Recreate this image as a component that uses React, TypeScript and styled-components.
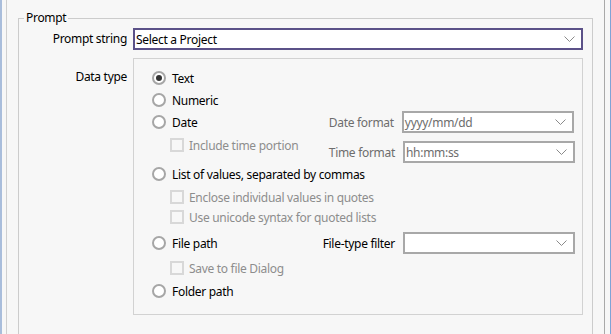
import styled, { createGlobalStyle } from 'styled-components';

const GlobalStyle = createGlobalStyle`
  html, body {
    margin: 0;
    padding: 0;
    background: #f7f7f7;
  }
  body {
    font-family: "Noto Sans", "Open Sans", sans-serif;
    font-size: 12px;
    letter-spacing: -0.3px;
    color: #000;
  }
`;

const Window = styled.div`
  width: 611px;
  height: 334px;
  box-sizing: border-box;
  overflow: hidden;
  background: #f7f7f7;
  border-left: 2px solid #a9bddb;
  border-right: 1px solid #7fa3d6;
  padding: 0 5px 0 4px;
  display: flex;
`;

const Pane = styled.div`
  flex: 1;
  border-left: 1px solid #cfcfcf;
  border-right: 1px solid #a9a9a9;
  padding: 10px 11px 0 11px;
`;

const GroupBox = styled.fieldset`
  margin: 0;
  padding: 2px 9px 20px 0;
  border: 1px solid #cccccc;
  min-width: 0;
`;

const Legend = styled.legend`
  margin-left: 5px;
  padding: 0 2px;
  line-height: 16px;
`;

const Form = styled.div`
  display: grid;
  grid-template-columns: 108px 1fr;
  column-gap: 6px;
  row-gap: 8px;
`;

const FieldLabel = styled.label<{ $top?: number }>`
  text-align: right;
  line-height: 16px;
  white-space: nowrap;
  align-self: ${p => (p.$top !== undefined ? 'start' : 'center')};
  padding-top: ${p => p.$top ?? 0}px;
`;

const Combo = styled.div<{ $accent?: boolean; $muted?: boolean; $width?: number }>`
  height: 22px;
  box-sizing: border-box;
  width: ${p => (p.$width ? `${p.$width}px` : '100%')};
  border: 2px solid ${p => (p.$accent ? '#5b5188' : '#a8a8a8')};
  background: #fff;
  display: flex;
  align-items: center;
  justify-content: space-between;
  padding: 0 6px 0 1px;
  color: ${p => (p.$muted ? '#6d6d6d' : '#000')};
  white-space: nowrap;
`;

const Chevron = () => (
  <svg width="11" height="6" viewBox="0 0 11 6">
    <polyline points="0.5,0.5 5.5,5.5 10.5,0.5" fill="none" stroke="#8a8a8a" strokeWidth="1" />
  </svg>
);

const OptionsPanel = styled.div`
  border: 1px solid #d2d2d2;
  padding: 8px 7px 12px 18px;
  display: flex;
  flex-direction: column;
`;

const Section = styled.div<{ $space?: number }>`
  display: flex;
  justify-content: space-between;
  align-items: flex-start;
  margin-top: ${p => p.$space ?? 0}px;
`;

const Column = styled.div<{ $gap?: number }>`
  display: flex;
  flex-direction: column;
  gap: ${p => p.$gap ?? 0}px;
`;

const Checks = styled.div<{ $space?: number }>`
  display: flex;
  flex-direction: column;
  margin-top: ${p => p.$space ?? 0}px;
  padding-left: 18px;
`;

const RadioRow = styled.div`
  height: 22px;
  display: flex;
  align-items: center;
  gap: 6px;
  white-space: nowrap;
`;

const RadioDot = styled.span<{ $checked?: boolean }>`
  width: 14px;
  height: 14px;
  box-sizing: border-box;
  border-radius: 50%;
  border: 2px solid #a6a6a6;
  background: #fff;
  display: flex;
  align-items: center;
  justify-content: center;

  &::after {
    content: '';
    width: 6px;
    height: 6px;
    border-radius: 50%;
    background: ${p => (p.$checked ? '#333' : 'transparent')};
  }
`;

const CheckRow = styled.div`
  height: 20px;
  display: flex;
  align-items: center;
  gap: 5px;
  color: #8d8d8d;
  white-space: nowrap;
`;

const CheckBox = styled.span`
  width: 14px;
  height: 14px;
  box-sizing: border-box;
  border: 2px solid #d8d8d8;
  background: #f7f7f7;
`;

const FieldRow = styled.div`
  display: flex;
  align-items: center;
  gap: 8px;
`;

const SideLabel = styled.span<{ $muted?: boolean }>`
  color: ${p => (p.$muted ? '#6d6d6d' : '#000')};
  white-space: nowrap;
`;

const Radio = ({ label, checked }: { label: string; checked?: boolean }) => (
  <RadioRow>
    <RadioDot $checked={checked} />
    {label}
  </RadioRow>
);

const Check = ({ label }: { label: string }) => (
  <CheckRow>
    <CheckBox />
    {label}
  </CheckRow>
);

const SideField = ({ label, value, muted }: { label: string; value?: string; muted?: boolean }) => (
  <FieldRow>
    <SideLabel $muted={muted}>{label}</SideLabel>
    <Combo $width={172} $muted>
      <span>{value}</span>
      <Chevron />
    </Combo>
  </FieldRow>
);

export default function App() {
  return (
    <>
      <GlobalStyle />
      <Window>
        <Pane>
          <GroupBox>
            <Legend>Prompt</Legend>
            <Form>
              <FieldLabel>Prompt string</FieldLabel>
              <Combo $accent>
                <span>Select a Project</span>
                <Chevron />
              </Combo>

              <FieldLabel $top={11}>Data type</FieldLabel>
              <OptionsPanel>
                <Radio label="Text" checked />
                <Radio label="Numeric" />
                <Section>
                  <Column>
                    <Radio label="Date" />
                    <Checks $space={2}>
                      <Check label="Include time portion" />
                    </Checks>
                  </Column>
                  <Column $gap={8}>
                    <SideField label="Date format" value="yyyy/mm/dd" muted />
                    <SideField label="Time format" value="hh:mm:ss" muted />
                  </Column>
                </Section>
                <Radio label="List of values, separated by commas" />
                <Checks $space={2}>
                  <Check label="Enclose individual values in quotes" />
                  <Check label="Use unicode syntax for quoted lists" />
                </Checks>
                <Section $space={5}>
                  <Column>
                    <Radio label="File path" />
                    <Checks $space={4}>
                      <Check label="Save to file Dialog" />
                    </Checks>
                  </Column>
                  <SideField label="File-type filter" />
                </Section>
                <Section $space={2}>
                  <Radio label="Folder path" />
                </Section>
              </OptionsPanel>
            </Form>
          </GroupBox>
        </Pane>
      </Window>
    </>
  );
}
